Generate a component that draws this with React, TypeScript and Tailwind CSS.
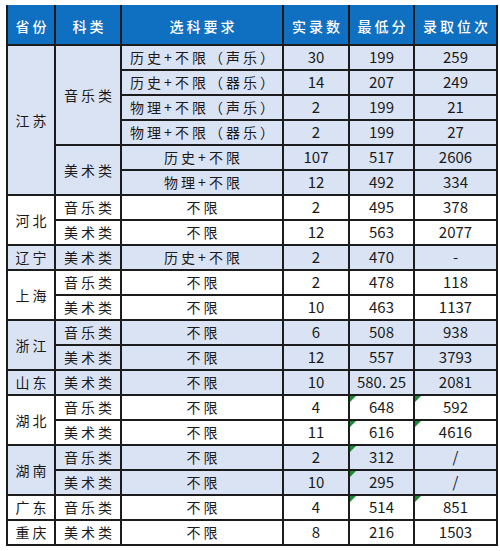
type Row = {
  province?: { name: string; span: number; shaded: boolean };
  category?: { name: string; span: number };
  req: string;
  count: string;
  min: string;
  rank: string;
  flagMin?: boolean;
  flagRank?: boolean;
  shaded: boolean;
};

const rows: Row[] = [
  { province: { name: '江苏', span: 6, shaded: true }, category: { name: '音乐类', span: 4 }, req: '历史+不限（声乐）', count: '30', min: '199', rank: '259', shaded: true },
  { req: '历史+不限（器乐）', count: '14', min: '207', rank: '249', shaded: true },
  { req: '物理+不限（声乐）', count: '2', min: '199', rank: '21', shaded: true },
  { req: '物理+不限（器乐）', count: '2', min: '199', rank: '27', shaded: true },
  { category: { name: '美术类', span: 2 }, req: '历史+不限', count: '107', min: '517', rank: '2606', shaded: true },
  { req: '物理+不限', count: '12', min: '492', rank: '334', shaded: true },
  { province: { name: '河北', span: 2, shaded: false }, category: { name: '音乐类', span: 1 }, req: '不限', count: '2', min: '495', rank: '378', shaded: false },
  { category: { name: '美术类', span: 1 }, req: '不限', count: '12', min: '563', rank: '2077', shaded: false },
  { province: { name: '辽宁', span: 1, shaded: true }, category: { name: '美术类', span: 1 }, req: '历史+不限', count: '2', min: '470', rank: '-', shaded: true },
  { province: { name: '上海', span: 2, shaded: false }, category: { name: '音乐类', span: 1 }, req: '不限', count: '2', min: '478', rank: '118', shaded: false },
  { category: { name: '美术类', span: 1 }, req: '不限', count: '10', min: '463', rank: '1137', shaded: false },
  { province: { name: '浙江', span: 2, shaded: true }, category: { name: '音乐类', span: 1 }, req: '不限', count: '6', min: '508', rank: '938', shaded: true },
  { category: { name: '美术类', span: 1 }, req: '不限', count: '12', min: '557', rank: '3793', shaded: true },
  { province: { name: '山东', span: 1, shaded: true }, category: { name: '美术类', span: 1 }, req: '不限', count: '10', min: '580. 25', rank: '2081', shaded: true },
  { province: { name: '湖北', span: 2, shaded: false }, category: { name: '音乐类', span: 1 }, req: '不限', count: '4', min: '648', rank: '592', flagMin: true, flagRank: true, shaded: false },
  { category: { name: '美术类', span: 1 }, req: '不限', count: '11', min: '616', rank: '4616', flagMin: true, flagRank: true, shaded: false },
  { province: { name: '湖南', span: 2, shaded: true }, category: { name: '音乐类', span: 1 }, req: '不限', count: '2', min: '312', rank: '/', flagMin: true, shaded: true },
  { category: { name: '美术类', span: 1 }, req: '不限', count: '10', min: '295', rank: '/', flagMin: true, shaded: true },
  { province: { name: '广东', span: 1, shaded: false }, category: { name: '音乐类', span: 1 }, req: '不限', count: '4', min: '514', rank: '851', flagMin: true, flagRank: true, shaded: false },
  { province: { name: '重庆', span: 1, shaded: false }, category: { name: '美术类', span: 1 }, req: '不限', count: '8', min: '216', rank: '1503', shaded: false },
];

const spanClass: Record<number, string> = {
  1: 'row-span-1',
  2: 'row-span-2',
  4: 'row-span-4',
  6: 'row-span-6',
};

const cell = 'relative flex items-center justify-center border-r-2 border-b-2 border-[#1c1c1c]';
const zh = 'text-[14px] tracking-[3px] pl-[3px]';
const num = 'text-[15px]';

function Flag() {
  return (
    <span className="absolute left-0 top-0 w-0 h-0 border-t-[6px] border-t-[#1d8a34] border-r-[6px] border-r-transparent" />
  );
}

export default function App() {
  const headers = ['省份', '科类', '选科要求', '实录数', '最低分', '录取位次'];

  return (
    <div className="w-[500px] h-[551px] bg-white pt-[5px] pl-[6px]" style={{ fontFamily: '"Noto Sans CJK SC", "Noto Sans", sans-serif' }}>
      <div className="grid grid-cols-[48px_66px_162px_66px_65px_83px] grid-rows-[41px_repeat(20,25px)] w-[490px] border-l-2 border-[#1c1c1c] text-[#1a1a1a]">
        {headers.map((h) => (
          <div key={h} className={`${cell} bg-[#0f6fc0] text-white font-medium text-[14px] tracking-[3px] pl-[3px] pt-[3px]`}>
            {h}
          </div>
        ))}
        {rows.map((r, i) => {
          const bg = r.shaded ? 'bg-[#dae3f3]' : 'bg-white';
          return [
            r.province && (
              <div key={`p${i}`} className={`${cell} ${spanClass[r.province.span]} ${r.province.shaded ? 'bg-[#dae3f3]' : 'bg-white'} ${zh}`}>
                {r.province.name}
              </div>
            ),
            r.category && (
              <div key={`c${i}`} className={`${cell} ${spanClass[r.category.span]} ${bg} ${zh}`}>
                {r.category.name}
              </div>
            ),
            <div key={`r${i}`} className={`${cell} ${bg} ${zh}`}>{r.req}</div>,
            <div key={`n${i}`} className={`${cell} ${bg} ${num}`}>{r.count}</div>,
            <div key={`m${i}`} className={`${cell} ${bg} ${num}`}>
              {r.flagMin && <Flag />}
              {r.min}
            </div>,
            <div key={`k${i}`} className={`${cell} ${bg} ${num}`}>
              {r.flagRank && <Flag />}
              {r.rank}
            </div>,
          ];
        })}
      </div>
    </div>
  );
}
